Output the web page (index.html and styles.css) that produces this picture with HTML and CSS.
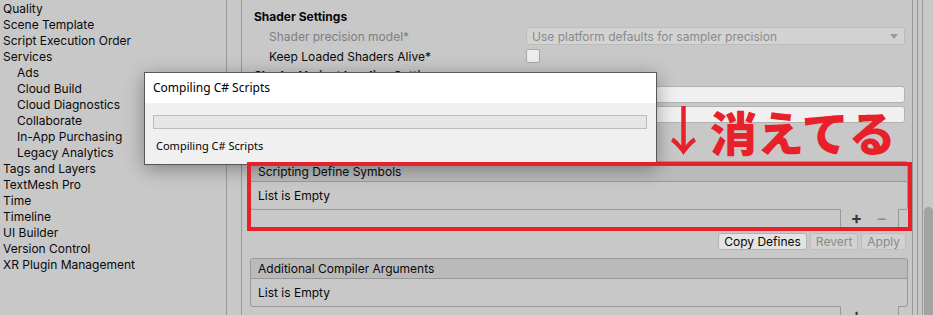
FILE: index.html
```html
<!doctype html>
<html>

<head>
	<meta charset="utf-8">
	<title>Project Settings</title>
	<link rel="stylesheet" href="styles.css">
</head>

<body>
	<div class="window">
		<ul class="nav">
			<li>Quality</li>
			<li>Scene Template</li>
			<li>Script Execution Order</li>
			<li>Services</li>
			<li class="sub">Ads</li>
			<li class="sub">Cloud Build</li>
			<li class="sub">Cloud Diagnostics</li>
			<li class="sub">Collaborate</li>
			<li class="sub">In-App Purchasing</li>
			<li class="sub">Legacy Analytics</li>
			<li>Tags and Layers</li>
			<li>TextMesh Pro</li>
			<li>Time</li>
			<li>Timeline</li>
			<li>UI Builder</li>
			<li>Version Control</li>
			<li>XR Plugin Management</li>
		</ul>
		<div class="split"></div>

		<div class="inspector">
			<div class="section-title">Shader Settings</div>
			<div class="row">
				<span class="label disabled">Shader precision model*</span>
				<div class="popup">
					<span>Use platform defaults for sampler precision</span>
					<svg width="8" height="5" viewBox="0 0 8 5"><path d="M0 0h8L4 5z" fill="#9a9a9a"/></svg>
				</div>
			</div>
			<div class="row">
				<span class="label">Keep Loaded Shaders Alive*</span>
				<span class="checkbox"></span>
			</div>
			<div class="section-title">Shader Variant Loading Settings</div>
			<div class="row">
				<span class="label">Default chunk size (in MB)*</span>
				<div class="textfield">16</div>
			</div>
			<div class="row">
				<span class="label">Default chunk count*</span>
				<div class="textfield">0</div>
			</div>
			<div class="section-title spaced">Script Compilation</div>

			<div class="list">
				<div class="list-header">Scripting Define Symbols</div>
				<div class="list-body">List is Empty</div>
			</div>
			<div class="list-footer">
				<span class="add">+</span>
				<span class="remove">−</span>
			</div>
			<div class="buttons">
				<span class="btn">Copy Defines</span>
				<span class="btn off">Revert</span>
				<span class="btn off">Apply</span>
			</div>

			<div class="list second">
				<div class="list-header">Additional Compiler Arguments</div>
				<div class="list-body">List is Empty</div>
			</div>
			<div class="list-footer">
				<span class="add">+</span>
				<span class="remove">−</span>
			</div>
		</div>

		<div class="gutter"></div>
		<div class="track">
			<div class="thumb"></div>
		</div>
	</div>

	<!-- compile progress window -->
	<div class="dialog">
		<div class="dialog-title">Compiling C# Scripts</div>
		<div class="dialog-body">
			<div class="progress"></div>
			<p class="dialog-text">Compiling C# Scripts</p>
		</div>
	</div>

	<!-- annotation -->
	<div class="mark-box"></div>
	<div class="mark-text"><span class="arrow">↓</span>消えてる</div>
</body>

</html>
```

FILE: styles.css
```css
body {
	margin: 0;
	width: 933px;
	height: 315px;
	overflow: hidden;
	position: relative;
	background-color: #c8c8c8;
	color: #090909;
	font-family: Inter, "Noto Sans", sans-serif;
	font-size: 12px;
}

.window {
	display: flex;
	height: 315px;
	overflow: hidden;
}

.nav {
	width: 226px;
	margin: 0;
	padding: 1px 0 0 0;
	list-style: none;
	border-right: 1px solid #999999;
}

.nav>li {
	height: 16px;
	line-height: 16px;
	padding-left: 3px;
	white-space: nowrap;
}

.nav>li.sub {
	padding-left: 17px;
}

.split {
	width: 14px;
	border-right: 1px solid #999999;
}

.inspector {
	width: 658px;
	padding: 8px 4px 0 8px;
	border-right: 1px solid #999999;
}

.section-title {
	height: 18px;
	line-height: 18px;
	padding-left: 4px;
	font-weight: 700;
	margin-bottom: 1px;
}

.section-title.spaced {
	margin-top: 10px;
	margin-bottom: 9px;
}

.row {
	display: flex;
	align-items: center;
	height: 18px;
	margin-bottom: 2px;
	padding-right: 3px;
}

.label {
	width: 257px;
	padding-left: 19px;
	white-space: nowrap;
}

.label.disabled {
	color: #7f7f7f;
}

.popup {
	flex: 1;
	display: flex;
	align-items: center;
	justify-content: space-between;
	height: 16px;
	padding: 0 6px 0 5px;
	border: 1px solid #bcbcbc;
	border-radius: 3px;
	background-color: #d3d3d3;
	color: #8a8a8a;
}

.checkbox {
	width: 12px;
	height: 12px;
	border: 1px solid #a8a8a8;
	border-radius: 2px;
	background-color: #ededed;
}

.textfield {
	flex: 1;
	align-self: flex-start;
	height: 15px;
	line-height: 15px;
	padding-left: 4px;
	border: 1px solid #b2b2b2;
	border-radius: 3px;
	background-color: #f0f0f0;
}

.list {
	border: 1px solid #999999;
	border-radius: 3px;
}

.list.second {
	margin-top: 8px;
}

.list-header {
	height: 19px;
	line-height: 19px;
	padding-left: 7px;
	background-color: #bababa;
	border-bottom: 1px solid #999999;
	border-radius: 3px 3px 0 0;
}

.list-body {
	height: 27px;
	line-height: 27px;
	padding-left: 7px;
}

.list-footer {
	display: flex;
	width: 50px;
	height: 20px;
	margin: -1px 9px 0 auto;
	padding: 0 4px 0 3px;
	border: 1px solid #999999;
	border-top: none;
	border-radius: 0 0 3px 3px;
	background-color: #c8c8c8;
}

.list-footer>span {
	width: 25px;
	text-align: center;
	font-size: 17px;
	line-height: 19px;
}

.list-footer>.add {
	color: #3a3a3a;
	font-weight: 700;
}

.list-footer>.remove {
	color: #8c8c8c;
}

.buttons {
	display: flex;
	justify-content: flex-end;
	gap: 3px;
	margin-top: 3px;
	padding-right: 2px;
}

.btn {
	height: 15px;
	line-height: 15px;
	padding: 0 5px;
	border: 1px solid #b2b2b2;
	border-radius: 3px;
	background-color: #e4e4e4;
}

.btn.off {
	background-color: #d2d2d2;
	border-color: #bdbdbd;
	color: #8a8a8a;
}

.gutter {
	width: 4px;
	border-right: 1px solid #999999;
}

.track {
	width: 10px;
	margin-left: 4px;
	border-left: 1px solid #999999;
}

.thumb {
	width: 9px;
	height: 120px;
	margin: 207px 0 0 1px;
	border-radius: 5px 5px 0 0;
	background-color: #a3a3a3;
}

.dialog {
	position: absolute;
	left: 144px;
	top: 72px;
	width: 511px;
	height: 91px;
	border: 1px solid #575757;
	background-color: #f0f0f0;
	box-shadow: 0 4px 18px rgba(0, 0, 0, 0.35);
	font-family: "Noto Sans", sans-serif;
}

.dialog-title {
	height: 30px;
	line-height: 30px;
	padding-left: 8px;
	background-color: #ffffff;
	font-size: 12px;
	color: #000000;
}

.dialog-body {
	padding: 12px 9px 0 8px;
}

.progress {
	height: 12px;
	border: 1px solid #bcbcbc;
	background-color: #e6e6e6;
}

.dialog-text {
	margin: 9px 0 0 3px;
	font-size: 11px;
	color: #000000;
}

.mark-box {
	position: absolute;
	left: 247px;
	top: 162px;
	width: 665px;
	height: 69px;
	box-sizing: border-box;
	border: 4px solid #e8202a;
}

.mark-text {
	position: absolute;
	left: 657px;
	top: 98px;
	color: #e8202a;
	font-family: "Noto Sans CJK JP", sans-serif;
	font-size: 47px;
	font-weight: 900;
	line-height: 60px;
	white-space: nowrap;
}

.mark-text>.arrow {
	font-size: 53px;
	font-weight: 500;
	margin-right: 0;
}
```
